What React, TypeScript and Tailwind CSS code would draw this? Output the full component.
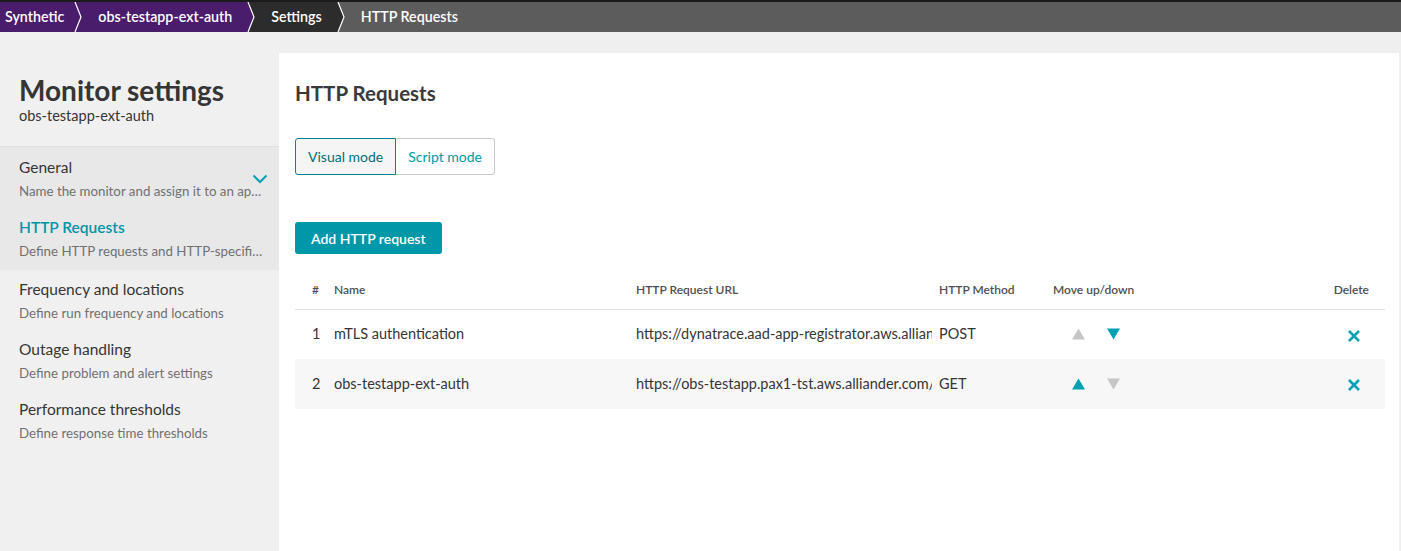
import React from "react";

const crumbs = [
  { label: "Synthetic", bg: "#4a1c6c" },
  { label: "obs-testapp-ext-auth", bg: "#4a1c6c" },
  { label: "Settings", bg: "#2c2c2c" },
  { label: "HTTP Requests", bg: "#5c5c5c" },
];

const navItems = [
  { title: "General", desc: "Name the monitor and assign it to an application", active: false, chevron: true, group: true },
  { title: "HTTP Requests", desc: "Define HTTP requests and HTTP-specific settings", active: true, chevron: false, group: true },
  { title: "Frequency and locations", desc: "Define run frequency and locations", active: false, chevron: false, group: false },
  { title: "Outage handling", desc: "Define problem and alert settings", active: false, chevron: false, group: false },
  { title: "Performance thresholds", desc: "Define response time thresholds", active: false, chevron: false, group: false },
];

const requests = [
  { n: 1, name: "mTLS authentication", url: "https://dynatrace.aad-app-registrator.aws.alliander.com/token", method: "POST", up: false, down: true },
  { n: 2, name: "obs-testapp-ext-auth", url: "https://obs-testapp.pax1-tst.aws.alliander.com/", method: "GET", up: true, down: false },
];

/* chevron separator between two breadcrumb segments */
function Sep({ left, right }: { left: string; right: string }) {
  return (
    <svg width="8" height="30" viewBox="0 0 8 30" className="shrink-0 block" style={{ background: right }}>
      <polygon points="0,0 1,0 7,15 1,30 0,30" fill={left} />
      <polyline points="1,0 7,15 1,30" fill="none" stroke="#ffffff" strokeWidth="1.2" />
    </svg>
  );
}

function Triangle({ dir, on }: { dir: "up" | "down"; on: boolean }) {
  return (
    <svg width="13" height="12" viewBox="0 0 13 12" className="block">
      <polygon points={dir === "up" ? "6.5,0.5 13,11.5 0,11.5" : "0,0.5 13,0.5 6.5,11.5"} fill={on ? "#00a1b2" : "#c6c6c6"} />
    </svg>
  );
}

export default function App() {
  return (
    <div className="w-[1401px] h-[551px] overflow-hidden bg-[#efefef] text-[#353535] flex flex-col" style={{ fontFamily: "Lato, 'Open Sans', sans-serif" }}>
      {/* breadcrumb */}
      <div className="border-t-2 border-[#1b1b1b] bg-[#5c5c5c] flex h-[32px] shrink-0 text-white text-[14.25px] font-semibold">
        {crumbs.map((c, i) => (
          <React.Fragment key={c.label}>
            <div
              className={"h-[30px] flex items-center " + (i === 0 ? "pl-[5px] pr-[10px]" : "pl-[16px] pr-[15px]")}
              style={{ background: c.bg }}
            >
              {c.label}
            </div>
            {i < crumbs.length - 1 && <Sep left={c.bg} right={crumbs[i + 1].bg} />}
          </React.Fragment>
        ))}
      </div>

      <div className="flex flex-1 min-h-0 pt-[21px]">
        {/* sidebar */}
        <aside className="w-[279px] shrink-0 -mt-[21px] bg-[#f0f0f0] flex flex-col">
          <div className="pt-[42px] pl-[19px] pb-[21px] border-b border-[#e0e0e0]">
            <h1 className="text-[28px] font-bold leading-[32px] text-[#353535]">Monitor settings</h1>
            <div className="text-[14.5px] leading-[18px] mt-[1px]">obs-testapp-ext-auth</div>
          </div>
          <div className="bg-[#e8e8e8] pb-[3px]">
            {navItems.filter((n) => n.group).map((n) => (
              <NavItem key={n.title} {...n} />
            ))}
          </div>
          <div className="-mt-[1px]">
            {navItems.filter((n) => !n.group).map((n) => (
              <NavItem key={n.title} {...n} />
            ))}
          </div>
        </aside>

        {/* main panel */}
        <main className="flex-1 bg-white mr-[2px] pl-[16px] pr-[14px] pt-[27px]">
          <h2 className="text-[20.5px] font-bold leading-[26px] text-[#3a3a3a]">HTTP Requests</h2>

          <div className="flex mt-[32px]">
            <button className="h-[37px] px-[12px] border border-[#00818f] rounded-l-[3px] bg-[#f5f5f5] text-[14px] text-[#006e7a]">
              Visual mode
            </button>
            <button className="h-[37px] px-[12px] border border-l-0 border-[#cccccc] rounded-r-[3px] bg-white text-[14px] text-[#0099a8]">
              Script mode
            </button>
          </div>

          <button className="mt-[47px] h-[32px] px-[16px] rounded-[3px] bg-[#0098a8] text-white text-[14px] font-semibold">
            Add HTTP request
          </button>

          <table className="w-full mt-[18px] text-[14.5px] table-fixed border-collapse">
            <thead>
              <tr className="text-[12px] font-semibold text-[#4f4f4f] border-b border-[#e2e2e2] h-[37px]">
                <th className="w-[39px] text-left pl-[17px] font-semibold">#</th>
                <th className="w-[302px] text-left font-semibold">Name</th>
                <th className="w-[303px] text-left font-semibold">HTTP Request URL</th>
                <th className="w-[114px] text-left font-semibold">HTTP Method</th>
                <th className="text-left font-semibold">Move up/down</th>
                <th className="w-[80px] text-right pr-[16px] font-semibold">Delete</th>
              </tr>
            </thead>
            <tbody>
              {requests.map((r, i) => (
                <tr key={r.n} className={"h-[50px] " + (i % 2 === 1 ? "bg-[#f7f7f7]" : "bg-white")}>
                  <td className="pl-[17px]">{r.n}</td>
                  <td>{r.name}</td>
                  <td className="whitespace-nowrap">
                    <div className="w-[296px] overflow-hidden">{r.url}</div>
                  </td>
                  <td>{r.method}</td>
                  <td>
                    <div className="flex items-center gap-[22px] pl-[19px]">
                      <Triangle dir="up" on={r.up} />
                      <Triangle dir="down" on={r.down} />
                    </div>
                  </td>
                  <td className="text-right pr-[24px]">
                    <svg width="14" height="14" viewBox="0 0 14 14" className="inline-block align-middle">
                      <path d="M2 2 L12 12 M12 2 L2 12" stroke="#00a1b2" strokeWidth="2.6" strokeLinecap="butt" />
                    </svg>
                  </td>
                </tr>
              ))}
            </tbody>
          </table>
        </main>
      </div>
    </div>
  );
}

function NavItem({ title, desc, active, chevron }: { title: string; desc: string; active: boolean; chevron: boolean }) {
  return (
    <div className="relative pl-[19px] pr-[13px] pt-[10px] pb-[7px]">
      <div className={"text-[15.5px] leading-[20px] " + (active ? "text-[#0095a6] font-semibold" : "text-[#353535]")}>{title}</div>
      <div className="text-[13.3px] leading-[18px] mt-[5px] text-[#707070] truncate">{desc}</div>
      {chevron && (
        <svg width="16" height="10" viewBox="0 0 16 10" className="absolute right-[11px] top-[27px]">
          <polyline points="1.5,1.5 8,8 14.5,1.5" fill="none" stroke="#00a1b2" strokeWidth="2" />
        </svg>
      )}
    </div>
  );
}
